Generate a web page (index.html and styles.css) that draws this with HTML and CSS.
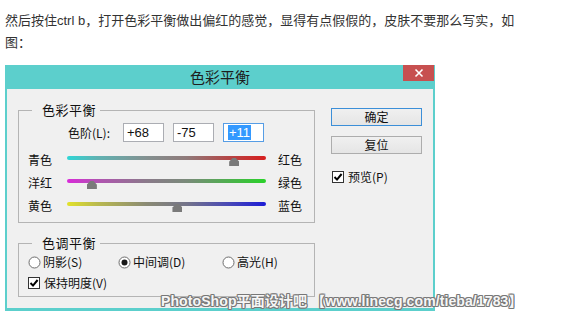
FILE: index.html
```html
<!DOCTYPE html>
<html lang="zh-CN">
<head>
<meta charset="utf-8">
<title>色彩平衡</title>
<link rel="stylesheet" href="styles.css">
</head>
<body>
<p class="intro">然后按住ctrl b，打开色彩平衡做出偏红的感觉，显得有点假假的，皮肤不要那么写实，如图：</p>
<div class="dialog">
  <div class="titlebar">
    <span class="title">色彩平衡</span>
    <span class="close"><svg width="10" height="10" viewBox="0 0 10 10"><path d="M1.5 1.5 L8.5 8.5 M8.5 1.5 L1.5 8.5" stroke="#fff" stroke-width="1.6" fill="none"/></svg></span>
  </div>
  <div class="dlg-body">
    <div class="left">
      <fieldset class="group g1">
        <legend>色彩平衡</legend>
        <div class="gbody">
          <div class="levels">
            <span class="lv-label">色阶(L):</span>
            <span class="lv-input">+68</span>
            <span class="lv-input">-75</span>
            <span class="lv-input active"><span class="sel">+11</span></span>
          </div>
          <div class="slider-row">
            <span class="lab">青色</span>
            <div class="track cr"><span class="thumb" style="left:84%"></span></div>
            <span class="lab rlab">红色</span>
          </div>
          <div class="slider-row">
            <span class="lab">洋红</span>
            <div class="track mg"><span class="thumb" style="left:12.5%"></span></div>
            <span class="lab rlab">绿色</span>
          </div>
          <div class="slider-row">
            <span class="lab">黄色</span>
            <div class="track yb"><span class="thumb" style="left:55.5%"></span></div>
            <span class="lab rlab">蓝色</span>
          </div>
        </div>
      </fieldset>
      <fieldset class="group g2">
        <legend>色调平衡</legend>
        <div class="gbody2">
          <div class="radio-row">
            <span class="opt o1"><svg class="radio" width="13" height="13" viewBox="0 0 13 13"><circle cx="6.5" cy="6.5" r="5.5" fill="#fff" stroke="#6d6d6d"/></svg>阴影(S)</span>
            <span class="opt o2"><svg class="radio" width="13" height="13" viewBox="0 0 13 13"><circle cx="6.5" cy="6.5" r="5.5" fill="#fff" stroke="#6d6d6d"/><circle cx="6.5" cy="6.5" r="3" fill="#1a1a1a"/></svg>中间调(D)</span>
            <span class="opt o3"><svg class="radio" width="13" height="13" viewBox="0 0 13 13"><circle cx="6.5" cy="6.5" r="5.5" fill="#fff" stroke="#6d6d6d"/></svg>高光(H)</span>
          </div>
          <div class="check-row">
            <svg class="cb" width="12" height="12" viewBox="0 0 12 12"><rect x="0.5" y="0.5" width="11" height="11" fill="#fff" stroke="#333"/><path d="M2.5 6 L5 8.6 L9.6 3" fill="none" stroke="#000" stroke-width="2"/></svg>保持明度(V)
          </div>
        </div>
      </fieldset>
    </div>
    <div class="right">
      <div class="btn default">确定</div>
      <div class="btn">复位</div>
      <div class="check-row preview">
        <svg class="cb" width="12" height="12" viewBox="0 0 12 12"><rect x="0.5" y="0.5" width="11" height="11" fill="#fff" stroke="#333"/><path d="M2.5 6 L5 8.6 L9.6 3" fill="none" stroke="#000" stroke-width="2"/></svg>预览(P)
      </div>
    </div>
  </div>
  <div class="watermark">PhotoShop平面设计吧 【www.linecg.com/tieba/1783】</div>
</div>
</body>
</html>
```

FILE: styles.css
```css
* { box-sizing: border-box; }
html, body { margin: 0; padding: 0; background: #fff; }
body { font-family: "Liberation Sans", "Noto Sans CJK SC", sans-serif; }

.intro {
  margin: 10px 0 0 5px;
  width: 516px;
  font-size: 13px;
  line-height: 22px;
  color: #333;
}

.dialog {
  position: relative;
  margin: 11px 0 0 5px;
  width: 430px;
  background: #5ccfcc;
  padding: 0 2px 3px;
  font-family: "Noto Sans CJK SC", sans-serif;
  color: #111;
}

.titlebar {
  display: grid;
  grid-template-columns: 1fr auto 1fr;
  height: 24px;
}
.title {
  grid-column: 2;
  font-size: 15px;
  line-height: 22px;
  padding-top: 1px;
  color: #1e1e1e;
}
.close {
  grid-column: 3;
  justify-self: end;
  align-self: start;
  width: 31px;
  height: 16px;
  margin-right: -1px;
  background: #c75050;
  display: flex;
  align-items: center;
  justify-content: center;
}

.dlg-body {
  display: flex;
  gap: 16px;
  height: 219px;
  background: #f0f0f0;
  padding: 14px 11px 0 11px;
}
.left { width: 297px; }
.right { width: 91px; padding-top: 5px; }

.group {
  margin: 0;
  padding: 0;
  min-width: 0;
  border: 1px solid #b4b4b4;
}
.group legend {
  margin-left: 13px;
  padding: 0 4px 0 10px;
  font-size: 13px;
  letter-spacing: 0.5px;
  line-height: 14px;
}
.g2 { margin-top: 13px; }

.gbody { padding: 6px 0 5px 9px; }
.gbody2 { padding: 4px 0 5px 9px; }

.levels {
  display: flex;
  height: 19px;
  padding-left: 40px;
}
.lv-label {
  width: 55px;
  font-size: 12px;
  line-height: 19px;
}
.lv-input {
  width: 41px;
  height: 19px;
  margin-right: 9px;
  background: #fff;
  border: 1px solid #abadb3;
  padding-left: 3px;
  font-family: "Liberation Sans", sans-serif;
  font-size: 13px;
  line-height: 17px;
  color: #111;
}
.lv-input.active { border-color: #569de5; }
.sel {
  background: #3399ff;
  color: #fff;
  padding: 0 1px;
  margin-left: 1px;
}

.slider-row {
  display: flex;
  align-items: flex-start;
  height: 23px;
}
.levels + .slider-row { margin-top: 6px; }
.lab {
  width: 39px;
  font-size: 12px;
  line-height: 23px;
}
.rlab { width: auto; margin-left: 12px; }
.track {
  position: relative;
  width: 199px;
  height: 4px;
  margin-top: 8px;
  border-radius: 2px;
}
.track.cr { background: linear-gradient(to right, #2fd6d6 0%, #5fb3b3 15%, #839090 40%, #8f7a7a 60%, #b64444 82%, #d81e1e 100%); }
.track.mg { background: linear-gradient(to right, #d92ad9 0%, #b252b2 15%, #8a7a8a 40%, #7a8a7a 60%, #4cb14c 82%, #2ad22a 100%); }
.track.yb { background: linear-gradient(to right, #e2e22a 0%, #baba4e 15%, #8a8a74 40%, #74748a 60%, #4646b8 82%, #1c1cd6 100%); }
.thumb {
  position: absolute;
  top: 2px;
  width: 10px;
  height: 8px;
  margin-left: -5px;
  background: #7a7a7a;
  clip-path: polygon(0 100%, 0 45%, 35% 0, 65% 0, 100% 45%, 100% 100%);
}

.radio-row {
  display: flex;
  height: 16px;
  font-size: 12px;
  line-height: 16px;
}
.opt { display: flex; align-items: center; gap: 2px; }
.o1 { width: 90px; }
.o2 { width: 104px; }
.check-row {
  display: flex;
  align-items: center;
  gap: 4px;
  height: 16px;
  margin-top: 5px;
  font-size: 12px;
  line-height: 16px;
}

.btn {
  height: 18px;
  border: 1px solid #adadad;
  background: linear-gradient(#f0f0f0, #e5e5e5);
  text-align: center;
  font-size: 12px;
  line-height: 16px;
  color: #111;
}
.btn.default { border-color: #3c8fd8; }
.btn + .btn { margin-top: 10px; }
.check-row.preview { margin-top: 16px; height: 14px; padding-left: 1px; }

.watermark {
  position: absolute;
  left: 156px;
  top: 228px;
  white-space: nowrap;
  font-family: "Liberation Sans", "Noto Sans CJK SC", sans-serif;
  font-weight: bold;
  font-size: 14px;
  letter-spacing: 0.1px;
  line-height: 16px;
  color: #f6f6f6;
  text-shadow: 1px 0 #777, -1px 0 #777, 0 1px #777, 0 -1px #777, 1px 1px #888, -1px -1px #888, 1px -1px #888, -1px 1px #888;
}
```
